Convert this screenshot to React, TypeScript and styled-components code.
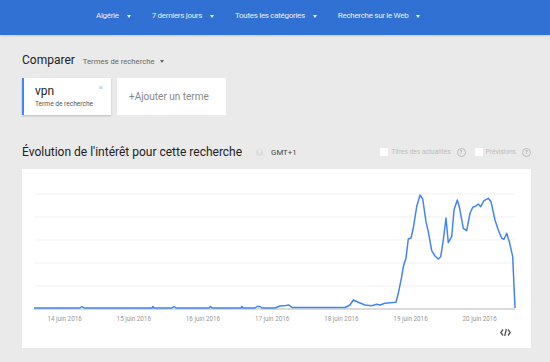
import styled, { createGlobalStyle } from 'styled-components'

const GlobalStyle = createGlobalStyle`
  html, body {
    margin: 0;
    padding: 0;
    background: #ebeaea;
    font-family: Roboto, 'Liberation Sans', Arial, sans-serif;
  }
`

const Page = styled.div`
  width: 550px;
  height: 362px;
  overflow: hidden;
  background: #ebeaea;
`

const TopBar = styled.header`
  height: 35px;
  box-sizing: border-box;
  padding: 0 0 4px 96px;
  background: #3171d3;
  display: flex;
  align-items: center;
  gap: 21px;
  box-shadow: 0 1px 2px rgba(0, 0, 0, 0.15);
`

const TopItem = styled.div`
  display: flex;
  align-items: center;
  gap: 8px;
  color: #e9eefa;
  font-size: 8px;
  letter-spacing: -0.3px;
`

const Caret = styled.span<{ color?: string }>`
  display: inline-block;
  width: 0;
  height: 0;
  border-left: 2.5px solid transparent;
  border-right: 2.5px solid transparent;
  border-top: 3px solid ${p => p.color || '#e9eefa'};
  margin-top: 1px;
`

const Content = styled.main`
  padding: 0 19px 0 22px;
  display: flex;
  flex-direction: column;
`

const CompareRow = styled.div`
  margin-top: 15px;
  height: 20px;
  display: flex;
  align-items: center;
  gap: 8px;
`

const Heading = styled.h2<{ size?: number }>`
  margin: 0;
  font-weight: 400;
  font-size: ${p => p.size || 12}px;
  color: #222;
`

const SubSelect = styled.div`
  display: flex;
  align-items: center;
  gap: 5px;
  font-size: 7.7px;
  color: #666;
  margin-top: 2px;
`

const Terms = styled.div`
  margin-top: 8px;
  display: flex;
  gap: 6px;
`

const TermCard = styled.div<{ active?: boolean; w: number }>`
  position: relative;
  width: ${p => p.w}px;
  height: 37px;
  box-sizing: border-box;
  background: #fff;
  border-left: ${p => (p.active ? '2px solid #4285f4' : 'none')};
  box-shadow: ${p => (p.active ? '0 1px 2px rgba(0,0,0,0.2)' : 'none')};
  display: flex;
  flex-direction: column;
  justify-content: center;
  padding-left: ${p => (p.active ? 11 : 12)}px;
`

const TermName = styled.div`
  font-size: 12px;
  color: #222;
  line-height: 12px;
`

const TermHint = styled.div`
  font-size: 6.6px;
  color: #555;
  margin-top: 3px;
`

const Close = styled.span`
  position: absolute;
  top: 5px;
  right: 8px;
  font-size: 8px;
  color: #bbb;
`

const AddTerm = styled.div`
  font-size: 10px;
  color: #888;
`

const TitleRow = styled.div`
  margin-top: 28px;
  height: 18px;
  display: flex;
  align-items: center;
`

const HelpDot = styled.span<{ outline?: boolean }>`
  display: inline-flex;
  align-items: center;
  justify-content: center;
  width: ${p => (p.outline ? 9 : 7)}px;
  height: ${p => (p.outline ? 9 : 7)}px;
  border-radius: 50%;
  box-sizing: border-box;
  font-size: 5px;
  font-weight: 700;
  background: ${p => (p.outline ? 'transparent' : '#dcdcdc')};
  border: ${p => (p.outline ? '1px solid #bbb' : 'none')};
  color: ${p => (p.outline ? '#aaa' : '#fff')};
`

const Timezone = styled.span`
  font-size: 7.8px;
  color: #444;
  margin-left: 8px;
`

const Options = styled.div`
  margin-left: auto;
  display: flex;
  align-items: center;
  gap: 3px;
`

const Check = styled.span`
  width: 8px;
  height: 8px;
  background: #fff;
  margin-left: 6px;
`

const OptionLabel = styled.span`
  font-size: 6.6px;
  color: #bdbdbd;
  margin-right: 3px;
`

const ChartCard = styled.section`
  margin-top: 8px;
  height: 179px;
  background: #fff;
  display: flex;
  flex-direction: column;
`

const AxisRow = styled.div`
  display: grid;
  grid-template-columns: repeat(7, 69.2px);
  padding-left: 8px;
  margin-top: 3px;
`

const AxisLabel = styled.span`
  font-size: 6.3px;
  color: #999;
  text-align: center;
`

const Footer = styled.div`
  display: flex;
  justify-content: flex-end;
  padding-right: 20px;
  margin-top: 5px;
`

const dates = ['14 juin 2016', '15 juin 2016', '16 juin 2016', '17 juin 2016', '18 juin 2016', '19 juin 2016', '20 juin 2016']

const series = [
  34, 308, 80, 308, 82, 306.5, 84, 308, 152, 308, 153, 306.5, 154, 308, 172, 308, 174, 306.5, 176, 308,
  209, 308, 210.5, 306.5, 212, 308, 241, 308, 242, 306.5, 243, 308, 255, 308, 257, 306.5, 260, 306.5, 262, 308,
  275, 308, 280, 306, 286, 305.5, 289, 305, 292, 307.5, 345, 307.5, 350, 305, 353.3, 300, 358.3, 302.3,
  365, 305, 371.7, 305.7, 376.7, 304.3, 380, 305, 385, 303.3, 390, 302.7, 396, 302.3, 398.3, 293.3,
  401.7, 276.7, 403.3, 266.7, 406, 258, 408.3, 239, 411, 238, 413.3, 228, 416.7, 206.7, 420, 195,
  422.7, 199, 426, 221.7, 428.3, 231.7, 431.7, 250.7, 435, 256, 438.3, 259, 440.7, 256.7, 443.3, 240,
  446, 218, 448.3, 242.7, 451.7, 236.7, 454, 210, 457.3, 200, 459.3, 206.7, 463.3, 228.3, 466.7, 230.7,
  470, 213.3, 472.7, 207.3, 476, 206, 478.3, 204, 480.7, 206.7, 484, 200.7, 488.3, 198.3, 491, 201.7,
  495, 220, 498.3, 230, 501.7, 238.3, 504, 239.3, 506.7, 233.3, 509.3, 241.7, 512.7, 256.7, 515, 308,
]

const points = series.reduce<string[]>((acc, v, i) => {
  if (i % 2 === 0) acc.push(`${v},${series[i + 1]}`)
  return acc
}, []).join(' ')

const Chart = () => (
  <svg width="509" height="143" viewBox="22 169 509 143">
    {[194, 217, 240, 263, 286].map(y => (
      <line key={y} x1="34" x2="515" y1={y} y2={y} stroke="#f1f1f1" strokeWidth="1" />
    ))}
    <line x1="34" x2="515" y1="309" y2="309" stroke="#cfcfcf" strokeWidth="1.5" />
    <polyline points={points} fill="none" stroke="#4285f4" strokeWidth="1.5" strokeLinejoin="round" />
  </svg>
)

const EmbedIcon = () => (
  <svg width="11" height="9" viewBox="0 0 11 9" fill="none" stroke="#555" strokeWidth="1.3">
    <polyline points="3,1.5 0.8,4.5 3,7.5" />
    <polyline points="8,1.5 10.2,4.5 8,7.5" />
    <line x1="6.3" y1="1" x2="4.7" y2="8" />
  </svg>
)

const topItems = ['Algérie', '7 derniers jours', 'Toutes les catégories', 'Recherche sur le Web']

export default function App() {
  return (
    <Page>
      <GlobalStyle />
      <TopBar>
        {topItems.map(label => (
          <TopItem key={label}>
            {label}
            <Caret />
          </TopItem>
        ))}
      </TopBar>
      <Content>
        <CompareRow>
          <Heading>Comparer</Heading>
          <SubSelect>
            Termes de recherche
            <Caret color="#666" />
          </SubSelect>
        </CompareRow>
        <Terms>
          <TermCard active w={89}>
            <TermName>vpn</TermName>
            <TermHint>Terme de recherche</TermHint>
            <Close>×</Close>
          </TermCard>
          <TermCard w={109}>
            <AddTerm>+Ajouter un terme</AddTerm>
          </TermCard>
        </Terms>
        <TitleRow>
          <Heading>Évolution de l'intérêt pour cette recherche</Heading>
          <HelpDot style={{ marginLeft: 14 }}>?</HelpDot>
          <Timezone>GMT+1</Timezone>
          <Options>
            <Check />
            <OptionLabel>Titres des actualités</OptionLabel>
            <HelpDot outline>?</HelpDot>
            <Check />
            <OptionLabel>Prévisions</OptionLabel>
            <HelpDot outline>?</HelpDot>
          </Options>
        </TitleRow>
        <ChartCard>
          <Chart />
          <AxisRow>
            {dates.map(d => (
              <AxisLabel key={d}>{d}</AxisLabel>
            ))}
          </AxisRow>
          <Footer>
            <EmbedIcon />
          </Footer>
        </ChartCard>
      </Content>
    </Page>
  )
}
